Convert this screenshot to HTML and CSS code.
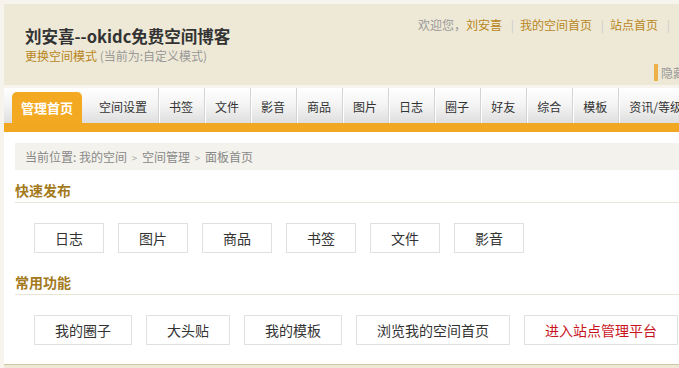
FILE: index.html
```html
<!DOCTYPE html>
<html>
  <head>
    <meta charset="utf-8">
    <title>刘安喜--okidc免费空间博客</title>
    <link rel="stylesheet" href="styles.css">
  </head>
  <body>
    <div class="page">
      <div class="header">
        <div class="brand">
          <h1>刘安喜--okidc免费空间博客</h1>
          <p class="mode"><a href="#">更换空间模式</a> <span class="muted">(当前为:自定义模式)</span></p>
        </div>
        <div class="toplinks">
          <div class="welcome">
            <span class="muted">欢迎您，</span><a href="#">刘安喜</a>
            <span class="sep">|</span><a href="#">我的空间首页</a>
            <span class="sep">|</span><a href="#">站点首页</a>
            <span class="sep">|</span>
          </div>
          <div class="hide-top">隐藏顶部</div>
        </div>
      </div>

      <div class="nav">
        <a class="tab active" href="#">管理首页</a>
        <a class="tab first" href="#">空间设置</a>
        <a class="tab" href="#">书签</a>
        <a class="tab" href="#">文件</a>
        <a class="tab" href="#">影音</a>
        <a class="tab" href="#">商品</a>
        <a class="tab" href="#">图片</a>
        <a class="tab" href="#">日志</a>
        <a class="tab" href="#">圈子</a>
        <a class="tab" href="#">好友</a>
        <a class="tab" href="#">综合</a>
        <a class="tab" href="#">模板</a>
        <a class="tab" href="#">资讯/等级</a>
      </div>

      <div class="content">
        <div class="crumbs">当前位置: 我的空间 <span class="gt">&gt;</span> 空间管理 <span class="gt">&gt;</span> 面板首页</div>

        <h2 class="section-title">快速发布</h2>
        <div class="buttons">
          <a class="btn" href="#">日志</a>
          <a class="btn" href="#">图片</a>
          <a class="btn" href="#">商品</a>
          <a class="btn" href="#">书签</a>
          <a class="btn" href="#">文件</a>
          <a class="btn" href="#">影音</a>
        </div>

        <h2 class="section-title">常用功能</h2>
        <div class="buttons">
          <a class="btn" href="#">我的圈子</a>
          <a class="btn" href="#">大头贴</a>
          <a class="btn" href="#">我的模板</a>
          <a class="btn" href="#">浏览我的空间首页</a>
          <a class="btn red" href="#">进入站点管理平台</a>
        </div>
      </div>

      <div class="footer"></div>
    </div>
  </body>
</html>
```

FILE: styles.css
```css
html, body {
  margin: 0;
  overflow: hidden;
}
body {
  background: #f6f4ec;
  font-family: "Noto Sans CJK SC", "DejaVu Sans", sans-serif;
  font-size: 12px;
  color: #333;
}
a {
  text-decoration: none;
}
.page {
  width: 740px;
  padding: 4px 0 0 4px;
  background: #f6f4ec;
}
.header {
  display: flex;
  justify-content: space-between;
  height: 81px;
  background: #eee9d6;
}
.brand {
  padding: 20px 0 0 21px;
}
.brand h1 {
  margin: 0;
  font-size: 16.5px;
  line-height: 24px;
  font-weight: bold;
  color: #333;
}
.mode {
  margin: 0;
  line-height: 16px;
}
.mode a {
  color: #b8861c;
}
.muted {
  color: #999;
}
.toplinks {
  display: flex;
  flex-direction: column;
  align-items: flex-end;
  padding-top: 13px;
}
.welcome {
  line-height: 16px;
  margin-right: 68px;
}
.welcome a {
  color: #b8861c;
}
.sep {
  color: #ccc;
  margin: 0 6px;
}
.hide-top {
  margin-top: 31px;
  margin-right: 35px;
  line-height: 17px;
  color: #999;
  border-left: 4px solid #eeb14a;
  padding-left: 3px;
}
.nav {
  display: flex;
  align-items: flex-end;
  margin-top: 3px;
  height: 35px;
  padding-left: 8px;
  background: linear-gradient(#ffffff, #f3f3f3 50%, #dedede);
  border-bottom: 9px solid #f1a722;
}
.tab {
  height: 35px;
  line-height: 38px;
  padding: 0 11px 0 10px;
  border-left: 1px solid #d3d3d3;
  box-shadow: inset 1px 0 0 #ffffff;
  color: #333;
  white-space: nowrap;
}
.tab.first {
  border-left: none;
  margin-left: 6px;
  padding-left: 11px;
  box-shadow: none;
}
.tab.active {
  height: 31px;
  line-height: 32px;
  width: 70px;
  padding: 0;
  text-align: center;
  border: none;
  border-radius: 5px 5px 0 0;
  background: #f3aa22;
  color: #fff;
  font-size: 13px;
  font-weight: bold;
  box-shadow: none;
}
.content {
  background: #fff;
  padding: 11px 0 19px 11px;
}
.crumbs {
  height: 27px;
  line-height: 27px;
  padding-left: 10px;
  background: #f4f2ec;
  color: #888;
}
.gt {
  font-size: 10px;
  color: #aaa;
  margin: 0 2px;
}
.section-title {
  margin: 10px 0 0;
  padding-bottom: 2px;
  border-bottom: 1px solid #e8e4d8;
  font-size: 14px;
  line-height: 20px;
  color: #a37a1c;
}
.buttons {
  display: flex;
  gap: 14px;
  margin: 20px 0 19px 19px;
}
.buttons:last-child {
  margin-bottom: 0;
}
.btn {
  height: 28px;
  line-height: 28px;
  padding: 0 20px;
  border: 1px solid #e0e0e0;
  background: #fff;
  color: #333;
  font-size: 14px;
  white-space: nowrap;
}
.btn.red {
  color: #c8141e;
}
.footer {
  height: 10px;
  background: #eee9d6;
  border-top: 1px solid #cfc6a2;
}
```
